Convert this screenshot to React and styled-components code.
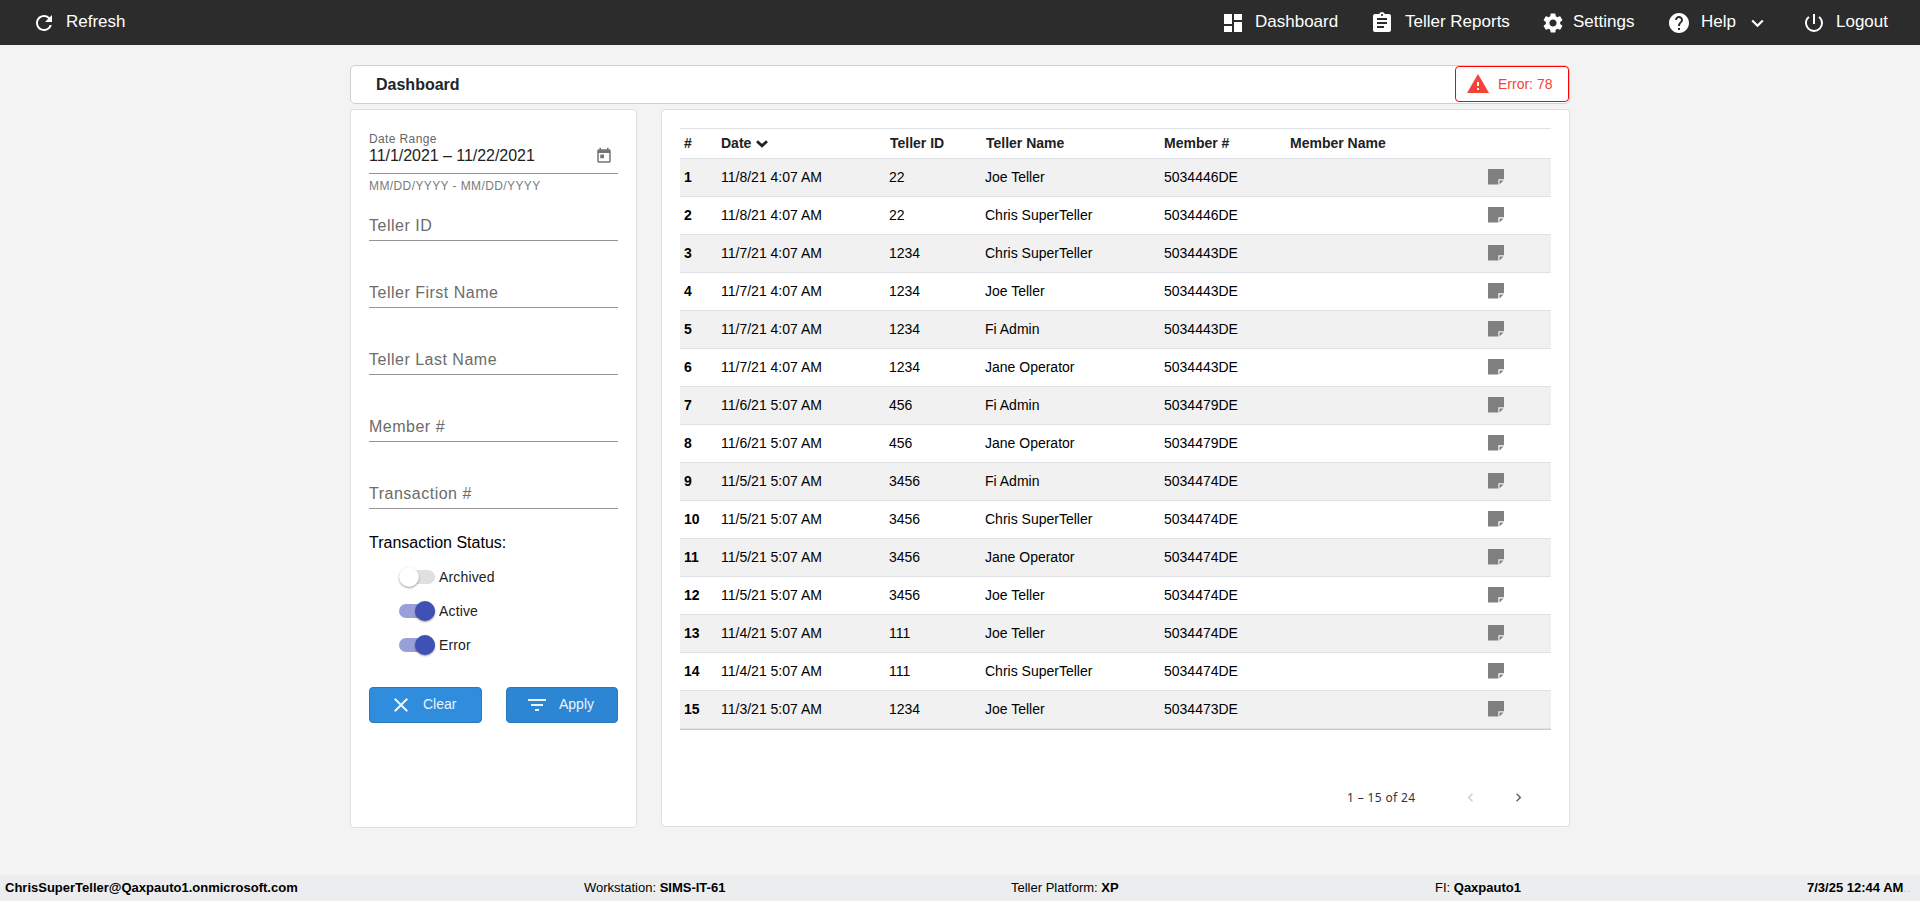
import React from "react";
import styled, { createGlobalStyle } from "styled-components";
import {
  MdRefresh,
  MdDashboard,
  MdAssignment,
  MdSettings,
  MdHelp,
  MdPowerSettingsNew,
  MdWarning,
  MdClose,
  MdFilterList,
  MdChevronLeft,
  MdChevronRight,
  MdToday,
} from "react-icons/md";

const GlobalStyle = createGlobalStyle`
  * {
    box-sizing: border-box;
  }

  body {
    margin: 0;
    background: #f3f3f3;
    color: #000;
    font-family: "Liberation Sans", Arial, sans-serif;
    font-size: 14px;
  }
`;

const Page = styled.div`
  display: flex;
  flex-direction: column;
  height: 901px;
  width: 100%;
`;

const NavBar = styled.nav`
  display: flex;
  height: 45px;
  padding: 0 31px 0 32px;
  background: #2c2c2c;
  color: white;
`;

const NavItem = styled.a`
  display: flex;
  align-items: center;
  width: ${(props) => props.$width};
  margin-right: ${(props) => (props.$first ? "auto" : "0")};
  padding-top: 1px;
  font-size: 17px;
  white-space: nowrap;

  span {
    padding-bottom: 2px;
  }

  svg {
    flex: none;
    margin-right: ${(props) => props.$gap || "10px"};
  }

  span + svg {
    margin: 0 0 0 15px;
  }
`;

const Content = styled.main`
  flex: 1;
  width: 1220px;
  margin-left: 350px;
  padding-top: 20px;
`;

const TitleBar = styled.header`
  display: flex;
  align-items: flex-start;
  justify-content: space-between;
  height: 39px;
  border: 1px solid #d0d0d2;
  border-radius: 5px;
  background: white;
`;

const TitleText = styled.h1`
  margin: 0 0 0 25px;
  font-size: 16px;
  line-height: 37px;
  color: #212529;
`;

const ErrorButton = styled.button`
  display: flex;
  align-items: center;
  width: 114px;
  height: 36px;
  padding: 0 0 0 10px;
  border: 1px solid red;
  border-radius: 4px;
  background: white;
  color: #f44336;
  font: 14px "Liberation Sans", Arial, sans-serif;

  svg {
    margin-right: 8px;
  }
`;

const Columns = styled.div`
  display: flex;
  align-items: flex-start;
  gap: 24px;
  margin-top: 5px;
`;

const Panel = styled.section`
  width: ${(props) => props.$width};
  height: ${(props) => props.$height};
  padding: 18px;
  border: 1px solid #dedfe1;
  border-radius: 4px;
  background: white;
`;

const DateField = styled.div`
  height: 46px;
  border-bottom: 1px solid #949494;
`;

const DateLabel = styled.div`
  padding-top: 4px;
  font-size: 12px;
  line-height: 14px;
  letter-spacing: 0.375px;
  color: #666;
`;

const DateValue = styled.div`
  display: flex;
  justify-content: space-between;
  align-items: center;
  height: 20px;
  padding-right: 5px;
  font-size: 16px;
  letter-spacing: -0.04px;
  color: #212121;

  svg {
    color: #757575;
  }
`;

const DateHint = styled.div`
  height: 21px;
  padding-top: 4px;
  font-size: 12px;
  line-height: 16px;
  letter-spacing: 0.4px;
  color: #7b7b7b;
`;

const Field = styled.div`
  height: ${(props) => (props.$first ? "46px" : "67px")};
  padding-top: ${(props) => (props.$first ? "22px" : "43px")};
  border-bottom: 1px solid #949494;
  font-size: 16px;
  line-height: 18px;
  letter-spacing: 0.5px;
  color: #6c6c6c;
`;

const StatusTitle = styled.div`
  margin: 25px 0 8px;
  font-size: 16px;
  line-height: 18px;
`;

const Toggle = styled.label`
  display: flex;
  align-items: center;
  height: 34px;
  margin-left: 30px;
  letter-spacing: 0.15px;
  color: #212121;
`;

const Track = styled.span`
  display: flex;
  align-items: center;
  justify-content: ${(props) => (props.$on ? "flex-end" : "flex-start")};
  width: 36px;
  height: 14px;
  margin-right: 4px;
  border-radius: 7px;
  background: ${(props) => (props.$on ? "#999fd8" : "#e0e0e0")};
`;

const Thumb = styled.span`
  flex: none;
  width: 20px;
  height: 20px;
  border-radius: 50%;
  background: ${(props) => (props.$on ? "#3f51b5" : "#fff")};
  box-shadow: 0 1px 2px rgba(0, 0, 0, 0.4);
`;

const Buttons = styled.div`
  display: flex;
  justify-content: space-between;
  margin-top: 25px;
`;

const ActionButton = styled.button`
  display: flex;
  align-items: center;
  width: ${(props) => props.$width};
  height: 36px;
  padding: 0 0 0 ${(props) => props.$pad};
  border: 1px solid #2a79bd;
  border-radius: 4px;
  background: ${(props) => props.$bg};
  color: #eaf4fc;
  font: 14px "Liberation Sans", Arial, sans-serif;

  svg {
    margin-right: 10px;
  }

  span {
    padding-bottom: 2px;
  }
`;

const Table = styled.table`
  width: 871px;
  table-layout: fixed;
  border-spacing: 0;
  border-bottom: 1px solid #dee2e6;
  box-shadow: 0 1px 0 #cbcbce;
  text-align: left;
`;

const HeadCell = styled.th`
  width: ${(props) => props.$width};
  height: 30px;
  padding: 0 0 2px ${(props) => props.$pad || "4px"};
  border-top: 1px solid #dee2e6;
  color: #212121;
  white-space: nowrap;

  svg {
    margin-left: 5px;
  }
`;

const Row = styled.tr`
  background: ${(props) => (props.$odd ? "#f1f1f1" : "white")};
`;

const Cell = styled.td`
  height: 38px;
  padding: 0 0 2px 4px;
  border-top: 1px solid #dee2e6;
  font-weight: ${(props) => (props.$bold ? "bold" : "normal")};
  white-space: nowrap;

  svg {
    display: block;
  }
`;

const Pager = styled.div`
  display: flex;
  align-items: center;
  height: 40px;
  margin-top: 48px;
  padding-left: 667px;
  font-family: "Noto Sans", "Open Sans", sans-serif;
  font-size: 12px;
  letter-spacing: 0.35px;
  color: #333;
`;

const PagerLabel = styled.span`
  flex: none;
  width: 115px;
`;

const PagerArrow = styled.span`
  flex: none;
  width: ${(props) => (props.$disabled ? "48px" : "17px")};
  height: 17px;
  color: ${(props) => (props.$disabled ? "#ccc" : "#5f5f5f")};
`;

const Footer = styled.footer`
  display: grid;
  grid-template-columns: 579px 427px 424px 372px 1fr;
  align-items: center;
  height: 26px;
  padding: 0 0 2px 5px;
  background: #ebedef;
  font-size: 13px;
  white-space: nowrap;
`;

const Dots = styled.span`
  color: #c4c6c8;
  font-weight: normal;
`;

const navItems = [
  { label: "Dashboard", icon: MdDashboard, width: "149px", gap: "10px" },
  { label: "Teller Reports", icon: MdAssignment, width: "171px", gap: "11px" },
  { label: "Settings", icon: MdSettings, width: "126px", gap: "8px" },
  { label: "Help", icon: MdHelp, width: "135px", gap: "10px", menu: true },
  { label: "Logout", icon: MdPowerSettingsNew, width: "87px", gap: "10px" },
];

const fields = [
  "Teller ID",
  "Teller First Name",
  "Teller Last Name",
  "Member #",
  "Transaction #",
];

const rows = [
  ["11/8/21 4:07 AM", "22", "Joe Teller", "5034446DE"],
  ["11/8/21 4:07 AM", "22", "Chris SuperTeller", "5034446DE"],
  ["11/7/21 4:07 AM", "1234", "Chris SuperTeller", "5034443DE"],
  ["11/7/21 4:07 AM", "1234", "Joe Teller", "5034443DE"],
  ["11/7/21 4:07 AM", "1234", "Fi Admin", "5034443DE"],
  ["11/7/21 4:07 AM", "1234", "Jane Operator", "5034443DE"],
  ["11/6/21 5:07 AM", "456", "Fi Admin", "5034479DE"],
  ["11/6/21 5:07 AM", "456", "Jane Operator", "5034479DE"],
  ["11/5/21 5:07 AM", "3456", "Fi Admin", "5034474DE"],
  ["11/5/21 5:07 AM", "3456", "Chris SuperTeller", "5034474DE"],
  ["11/5/21 5:07 AM", "3456", "Jane Operator", "5034474DE"],
  ["11/5/21 5:07 AM", "3456", "Joe Teller", "5034474DE"],
  ["11/4/21 5:07 AM", "111", "Joe Teller", "5034474DE"],
  ["11/4/21 5:07 AM", "111", "Chris SuperTeller", "5034474DE"],
  ["11/3/21 5:07 AM", "1234", "Joe Teller", "5034473DE"],
];

const NoteIcon = () => (
  <svg width="16" height="16" viewBox="0 0 16 16" fill="#808080">
    <path d="M0 0h16v10.3h-5.7v5.2H0z" />
    <path d="M11.5 11.5h4l-4 4z" />
  </svg>
);

const SortIcon = () => (
  <svg width="12" height="8" viewBox="0 0 12 8" fill="none" stroke="#212121" strokeWidth="2.8">
    <path d="M1 1.2l5 4.6 5-4.6" />
  </svg>
);

const MenuArrow = () => (
  <svg width="13" height="9" viewBox="0 0 13 9" fill="none" stroke="white" strokeWidth="2.2">
    <path d="M1.2 1.500l5.300 5.300 5.300-5.300" />
  </svg>
);

const Filters = () => (
  <Panel $width="287px" $height="719px">
    <DateField>
      <DateLabel>Date Range</DateLabel>
      <DateValue>
        <span>11/1/2021 – 11/22/2021</span>
        <MdToday size={18} />
      </DateValue>
    </DateField>
    <DateHint>MM/DD/YYYY - MM/DD/YYYY</DateHint>
    {fields.map((field, i) => (
      <Field key={field} $first={i === 0}>
        {field}
      </Field>
    ))}
    <StatusTitle>Transaction Status:</StatusTitle>
    {["Archived", "Active", "Error"].map((name) => (
      <Toggle key={name}>
        <Track $on={name !== "Archived"}>
          <Thumb $on={name !== "Archived"} />
        </Track>
        {name}
      </Toggle>
    ))}
    <Buttons>
      <ActionButton $width="113px" $pad="19px" $bg="#308ddd">
        <MdClose size={24} />
        <span>Clear</span>
      </ActionButton>
      <ActionButton $width="112px" $pad="18px" $bg="#2d86d3">
        <MdFilterList size={24} />
        <span>Apply</span>
      </ActionButton>
    </Buttons>
  </Panel>
);

const Transactions = () => (
  <Panel $width="909px" $height="718px">
    <Table>
      <thead>
        <tr>
          <HeadCell $width="37px">#</HeadCell>
          <HeadCell $width="168px">
            Date
            <SortIcon />
          </HeadCell>
          <HeadCell $width="96px" $pad="5px">Teller ID</HeadCell>
          <HeadCell $width="179px" $pad="5px">Teller Name</HeadCell>
          <HeadCell $width="126px">Member #</HeadCell>
          <HeadCell $width="198px">Member Name</HeadCell>
          <HeadCell />
        </tr>
      </thead>
      <tbody>
        {rows.map((row, i) => (
          <Row key={i} $odd={i % 2 === 0}>
            <Cell $bold>{i + 1}</Cell>
            {row.map((value, j) => (
              <Cell key={j}>{value}</Cell>
            ))}
            <Cell />
            <Cell>
              <NoteIcon />
            </Cell>
          </Row>
        ))}
      </tbody>
    </Table>
    <Pager>
      <PagerLabel>1 – 15 of 24</PagerLabel>
      <PagerArrow $disabled>
        <MdChevronLeft size={17} />
      </PagerArrow>
      <PagerArrow>
        <MdChevronRight size={17} />
      </PagerArrow>
    </Pager>
  </Panel>
);

export default class App extends React.Component {
  render() {
    return (
      <Page>
        <GlobalStyle />
        <NavBar>
          <NavItem $first>
            <MdRefresh size={24} />
            <span>Refresh</span>
          </NavItem>
          {navItems.map(({ label, icon: Icon, width, gap, menu }) => (
            <NavItem key={label} $width={width} $gap={gap}>
              <Icon size={24} />
              <span>{label}</span>
              {menu && <MenuArrow />}
            </NavItem>
          ))}
        </NavBar>
        <Content>
          <TitleBar>
            <TitleText>Dashboard</TitleText>
            <ErrorButton>
              <MdWarning size={24} />
              Error: 78
            </ErrorButton>
          </TitleBar>
          <Columns>
            <Filters />
            <Transactions />
          </Columns>
        </Content>
        <Footer>
          <b>ChrisSuperTeller@Qaxpauto1.onmicrosoft.com</b>
          <span>
            Workstation: <b>SIMS-IT-61</b>
          </span>
          <span>
            Teller Platform: <b>XP</b>
          </span>
          <span>
            FI: <b>Qaxpauto1</b>
          </span>
          <b>
            7/3/25 12:44 AM<Dots>..</Dots>
          </b>
        </Footer>
      </Page>
    );
  }
}
